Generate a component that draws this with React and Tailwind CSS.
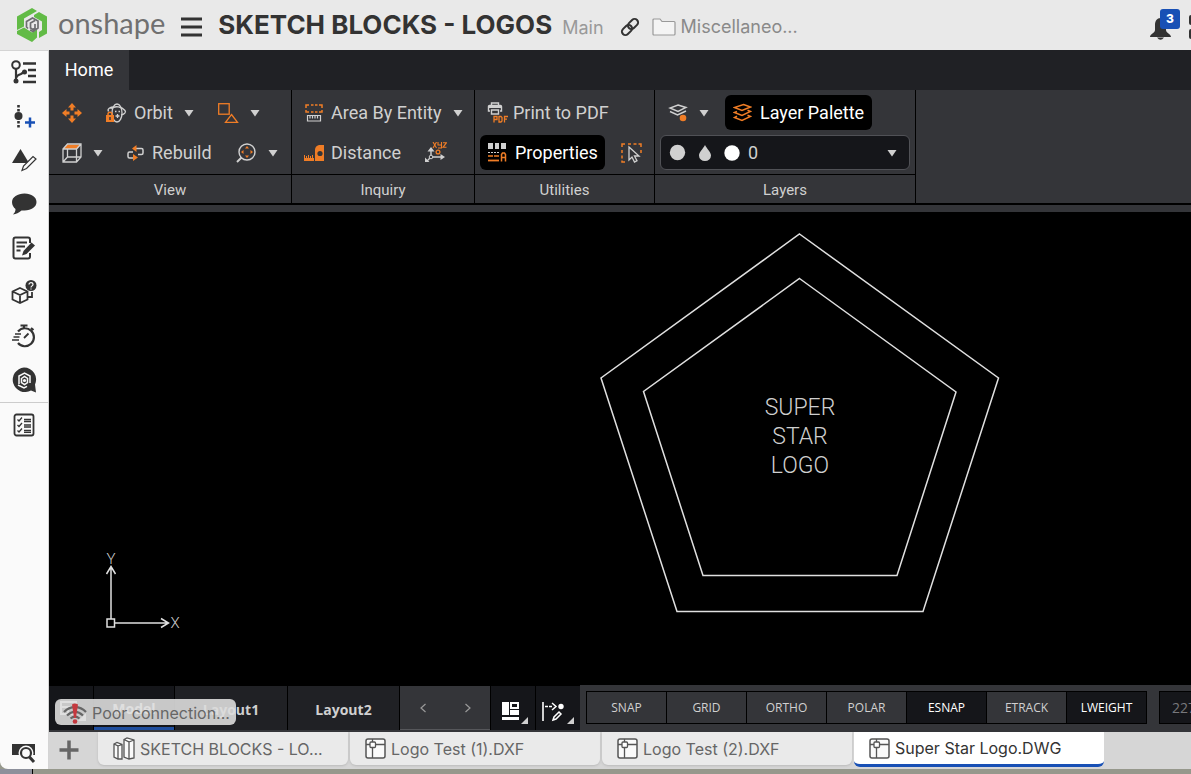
import React from 'react';

const G = '#d0d0d0';
const O = '#f07d26';
const D = '#333333';

function Svg({ w, h, children, className = '' }) {
  return (
    <svg width={w} height={h} viewBox={`0 0 ${w} ${h}`} fill="none" aria-hidden="true" className={`shrink-0 ${className}`}>
      {children}
    </svg>
  );
}

const Caret = () => (
  <Svg w={10} h={8}><path d="M.5 1h9L5 7.500z" fill={G} /></Svg>
);

const MoveIcon = () => (
  <Svg w={20} h={20}>
    <path fill={O} d="M10 0l4 4.500h-2.500V7.500h-3V4.500H6zM10 20l4-4.500h-2.500v-3h-3v3H6zM0 10l4.500-4v2.500h3v3h-3V14zM20 10l-4.500-4v2.500h-3v3h3V14z" />
  </Svg>
);
const OrbitIcon = () => (
  <Svg w={21} h={22}>
    <ellipse cx="11" cy="11" rx="5" ry="9" stroke={G} strokeWidth="1.300" />
    <path d="M5 6.500c4-3 11-2 14 2 1.500 2-1 4-4 4.500M2.500 9.500C1 7 4 5 8 5" stroke={G} strokeWidth="1.300" />
    <path d="M9 9.500h1.500M12.500 9.500H14M11.500 12v4M9.500 14h4" stroke={G} strokeWidth="1.300" />
    <path d="M2 14v-2c0-2.500 4-2.500 4 0v2" stroke={O} strokeWidth="1.500" />
    <rect x="0" y="13" width="8" height="7" fill={O} />
    <path d="M4 15v3" stroke="#343539" strokeWidth="1.500" />
  </Svg>
);
const ShapesIcon = () => (
  <Svg w={21} h={20}>
    <rect x=".7" y=".7" width="10.500" height="10.500" stroke={O} strokeWidth="1.300" />
    <path d="M13.500 11.500L19.500 19.300H7.500z" stroke={O} strokeWidth="1.300" />
  </Svg>
);
const CubeIcon = () => (
  <Svg w={20} h={20}>
    <path d="M5 1.500h14l-4 4.500H1z" fill={O} />
    <path d="M1 6l4.500-5H19v13l-4.500 5H1zM1 6h13.500L19 1M14.500 6v13M5.500 6v8.500M1 19l4.500-5H14M5.500 14H19" stroke={G} strokeWidth="1.300" />
  </Svg>
);
const RebuildIcon = () => (
  <Svg w={17} h={16}>
    <path d="M6 13H2.500Q1 13 1 11.500V8.500Q1 7 2.500 7H6M9 3.500h5.500Q16 3.500 16 5v3q0 1.500-1.500 1.500H11" stroke={G} strokeWidth="1.500" />
    <path d="M9.500 0v7L5 3.500zM6 9v7l5-3.500z" fill={O} />
  </Svg>
);
const ZoomIcon = () => (
  <Svg w={20} h={20}>
    <circle cx="11" cy="9" r="8" stroke={G} strokeWidth="1.400" />
    <path d="M5.500 14.500L1 19" stroke={G} strokeWidth="2" />
    <path d="M11 3l2 2.500H9zM11 15l2-2.500H9zM5 9l2.500-2v4zM17 9l-2.500-2v4z" fill={O} />
  </Svg>
);
const AreaIcon = () => (
  <Svg w={18} h={18}>
    <path d="M1 4V1h3M14 1h3v3M17 6v2h-3M4 8H1V6M6 1h2.500M10 1h2.500M6 8h2.500M10 8h2.500" stroke={O} strokeWidth="1.500" />
    <path d="M2.500 11.500h13v5.500h-13zM5 12v2.500M7.500 12v2.500M10 12v2.500M12.500 12v2.500" stroke={G} strokeWidth="1.200" />
  </Svg>
);
const TapeIcon = () => (
  <Svg w={20} h={16}>
    <path fill={O} d="M11 16V5q0-4 4-5h5v16zM0 13h10v3H0zM0 10h1v3H0zM2 11h1v2H2zM4 10h1v3H4zM6 11h1v2H6zM8 10h1v3H8z" />
    <circle cx="16" cy="8.500" r="2.600" fill="#343539" />
  </Svg>
);
const XyzIcon = () => (
  <Svg w={22} h={22}>
    <path d="M6 8v7M6 15h11M6 15l-4 4" stroke={G} strokeWidth="1.400" />
    <path d="M6 5l3.500 4.500h-7zM20 15l-4.500-3v6zM0 20v-4.500L4.500 20z" fill={G} />
    <circle cx="6" cy="15" r="1.800" fill="#343539" stroke={G} />
    <circle cx="13" cy="10" r="1.900" stroke={O} strokeWidth="1.300" />
    <path d="M8 0l3.500 6M11.500 0L8 6M13 0v3h3.500M16.500 0v6H13M18 .7h3.500L18 5.300h3.500" stroke={O} strokeWidth="1.100" />
  </Svg>
);
const PrintIcon = () => (
  <Svg w={22} h={21}>
    <path d="M4.500 4V1h7v3M3 9H1.500V4.500q0-1 1-1h11q1 0 1 1V9H13M4.500 8h7v4h-7z" stroke={G} strokeWidth="1.400" />
    <path d="M1.500 4h13v2h-13z" fill={G} />
    <path d="M7 20.500v-6h3v3H7M12 14.500v5.500h2l1-1v-3.500l-1-1zM17.500 20.500v-6h3.500M17.500 17.200h2.500" stroke={O} strokeWidth="1.300" />
  </Svg>
);
const PropsIcon = () => (
  <Svg w={20} h={19}>
    <path fill={G} d="M1 0h5v6H1zM8 0h4v6H8zM14 0h5v6h-5z" />
    <path d="M1 9.500h11" stroke={G} strokeWidth="1.200" strokeDasharray="2 1" />
    <path d="M1 13h11" stroke={O} strokeWidth="1.500" strokeDasharray="5 1" />
    <path d="M1 17.500h11" stroke={O} strokeWidth="1.800" />
    <path d="M14.500 18.500v-7l1-1.500h2l1 1.500v7M14.500 14.500h4" stroke={O} strokeWidth="1.500" />
  </Svg>
);
const SelectIcon = () => (
  <Svg w={21} h={20}>
    <path d="M1 4V1h3M7 1h3M12.500 1h3M17.500 1H20v3M1 7v3M1 12.500v3M1 17.500V19h3M20 7v3" stroke={O} strokeWidth="1.500" />
    <path d="M8 4v13l3-3 2.500 5 2.500-1.300L13.500 13H18z" fill="#343539" stroke={G} strokeWidth="1.300" />
  </Svg>
);
const LayerDotIcon = () => (
  <Svg w={20} h={18}>
    <path d="M10 1l8 2.500-8 4-8-3.500zM2 7.500l7.500 3.500L18 7" stroke={G} strokeWidth="1.400" />
    <circle cx="15" cy="14" r="3.300" fill={O} />
  </Svg>
);
const LayersIcon = () => (
  <Svg w={19} h={19}>
    <path d="M10.500 1.500l7 2.500-8.500 3.500L1.500 4.500zM4 8.500L1.500 9.500l7.500 3 8.500-4-3-1.300M4 13.200l-2.500 1.300 7.500 3 8.500-4-3-1.300" stroke={O} strokeWidth="1.500" />
  </Svg>
);

const rail = [
  ['Feature list', <Svg w={26} h={24} key="i">
    <circle cx="5" cy="5" r="3.800" stroke={D} strokeWidth="2" />
    <path d="M5 9v12M5 18c1-3 3-3.500 5-4l3-2" stroke={D} strokeWidth="2.200" />
    <circle cx="5" cy="21" r="2.500" fill={D} /><circle cx="13.500" cy="12" r="2.500" fill={D} />
    <path d="M12 3.500h13M17 10h8M17 16h8M12 22h13" stroke={D} strokeWidth="2.400" />
  </Svg>],
  ['Insert', <Svg w={26} h={24} key="i">
    <path d="M7.500 1v23" stroke={D} strokeWidth="2.600" strokeDasharray="2.500 1.500" />
    <circle cx="7.500" cy="12" r="4" fill={D} />
    <path d="M14 18.500h10M19 13.500v10" stroke="#1850b5" strokeWidth="2.500" />
  </Svg>],
  ['Appearance', <Svg w={26} h={24} key="i">
    <path d="M9.500 1L18 15H1z" fill={D} />
    <path d="M11 22.500l1.500-4.500 9.500-9.500 3 2.500-9.500 9.500z" fill="#fafafa" stroke={D} strokeWidth="1.200" />
  </Svg>],
  ['Comments', <Svg w={26} h={24} key="i">
    <path fill={D} d="M13.500 1.500c7 0 12 3.600 12 8.500s-5 8.500-12 8.500h-3C8 21 5 22 2 22.500c1.500-1.500 2.500-3 2.500-5.500-2-1.500-3.500-4-3.500-7 0-4.900 5.500-8.500 12.500-8.500z" />
  </Svg>],
  ['Notes', <Svg w={26} h={24} key="i">
    <path d="M19 7V3.500Q19 1.500 17 1.500H4.500q-2 0-2 2v17q0 2 2 2H17q2 0 2-2V17" stroke={D} strokeWidth="2" />
    <path d="M5.500 6.500H16M5.500 10.500H14M5.500 14.500h4" stroke={D} strokeWidth="2" />
    <path fill={D} d="M11 19.500l1.500-4.500 8-8.500 3.500 3-8.500 8.500z" />
  </Svg>],
  ['Part help', <Svg w={26} h={24} key="i">
    <path d="M9 8l7.500 3.500v8L9 23l-7.500-3.500v-8zM1.500 11.500L9 15l7.500-3.500M9 15v8M17 17h4v-5" stroke={D} strokeWidth="1.800" />
    <circle cx="20" cy="5.500" r="5.500" fill={D} />
    <path d="M18 4.500c0-2.500 4-2.500 4 0 0 1.300-2 1.500-2 3M20 8.500v1" stroke="#fafafa" strokeWidth="1.200" />
  </Svg>],
  ['Timing', <Svg w={26} h={24} key="i">
    <path d="M7 7.500A9 9 0 1 1 7 19M9.500 1.500h7M13 2v3M20 4l2.500 2" stroke={D} strokeWidth="2.200" />
    <path d="M13 14l4.500-4.500" stroke={D} strokeWidth="1.800" />
    <path d="M4 10h6M2.500 13h6M1 16h7" stroke={D} strokeWidth="1.500" />
  </Svg>],
  ['Support', <Svg w={26} h={26} key="i">
    <path fill={D} d="M13 .5a12 12 0 0 1 11 17l1 8-5-2A12.300 12.300 0 1 1 13 .5z" />
    <path d="M8 17V9l5.500-3 5.500 3v7M7 18l6 3 3-1.700M10.500 11.500l3-2 3 2v4l-3 2-3-2z" stroke="#fafafa" strokeWidth="1.500" />
    <circle cx="13.500" cy="13.500" r="1.600" fill="#fafafa" />
  </Svg>],
];

function Rail() {
  return (
    <nav className="flex w-[49px] shrink-0 flex-col rounded-bl-lg border-r border-[#d4d4d4] bg-[#fafafa] shadow-[inset_0_1px_0_#d4d4d4]">
      {rail.map(([label, icon]) => (
        <button key={label} aria-label={label} className="flex h-11 items-center justify-center">{icon}</button>
      ))}
      <button aria-label="Checklist" className="flex h-11 items-center justify-center border-t border-[#cccccc]">
        <Svg w={22} h={24}>
          <rect x="1.500" y="1.500" width="19" height="21" rx="2" stroke={D} strokeWidth="1.800" />
          <path d="M4.500 6.500L6 8l3-3.500M4.500 12L6 13.500l3-3.500M4.500 17.500L6 19l3-3.500M11 6.500h7M11 8.500h7M11 12h7M11 14h7M11 17.500h7M11 19.300h7" stroke={D} strokeWidth="1.300" />
        </Svg>
      </button>
      <button aria-label="Tab manager" className="mt-auto flex h-8 items-center justify-center">
        <Svg w={24} h={20}>
          <path fill={D} d="M0 1h23v11H0z" />
          <circle cx="14" cy="10" r="7.500" fill="#fafafa" />
          <circle cx="14" cy="10" r="5" stroke={D} strokeWidth="2.200" />
          <path d="M17.500 14l4.500 5" stroke={D} strokeWidth="3" />
        </Svg>
      </button>
    </nav>
  );
}

function Header() {
  return (
    <header className="flex h-[50px] shrink-0 items-center overflow-hidden bg-[#e9e9e9] pl-4 font-[Inter,sans-serif] whitespace-nowrap">
      <Svg w={32} h={36}>
        <path fill="#62bb46" d="M16 1l5 3-13 7.500v8L1 23V9.500zM23 5l8 4.500v17L23 31v-6l3-2v-8.500l-8-4.500v-2zM1 24l7-3.500 8 5 5-3v8L16 35 1 27z" />
        <path d="M12 21.500l-1.500-1.500v-5.500l6-3.500 5.500 3v7l-5 3.500-3-1.500M19 13.500l-4.500 2.500v5l2.500 1.500 2-1.500v-4" stroke="#6d6e70" strokeWidth="1.700" />
      </Svg>
      <span className="ml-2.5 pb-1 font-[Lato,sans-serif] text-[29px] leading-8 text-[#707070]">onshape</span>
      <button aria-label="Menu" className="ml-4 pt-1">
        <Svg w={21} h={20}><path d="M0 2h21M0 10h21M0 18h21" stroke={D} strokeWidth="3.200" /></Svg>
      </button>
      <h1 className="ml-4 text-[26px] leading-8 font-bold text-[#333333]">SKETCH BLOCKS - LOGOS</h1>
      <span className="ml-2.5 pt-1.5 text-lg text-[#999999]">Main</span>
      <button aria-label="Copy link" className="ml-4 pt-1">
        <Svg w={20} h={20}>
          <g transform="rotate(-45 10 10)" stroke={D} strokeWidth="2">
            <rect x="0" y="6.500" width="11.500" height="7" rx="3.500" /><rect x="8.500" y="6.500" width="11.500" height="7" rx="3.500" />
          </g>
        </Svg>
      </button>
      <a href="#folder" className="ml-3 flex items-center gap-[5px] pt-1 text-lg text-[#8a8a8a]">
        <Svg w={24} h={18}><path d="M1 16V2q0-1 1-1h6l2 2.500h12q1 0 1 1V16q0 1-1 1H2q-1 0-1-1z" fill="#f4f4f4" stroke="#999" strokeWidth="1.200" /></Svg>
        Miscellaneo...
      </a>
      <button aria-label="Notifications" className="relative ml-auto pt-2">
        <Svg w={22} h={24}><path fill={D} d="M10.500 1C14 1 16 4 16 8v5c0 3 5 4 5 7H0c0-3 5-4 5-7V8c0-4 2-7 5.500-7zM7 20.500h7q-3.500 4.500-7 0z" /></Svg>
        <span className="absolute top-0 left-2.5 flex size-5 items-center justify-center rounded-[3px] bg-[#1850b5] text-xs font-extrabold text-white">3</span>
      </button>
      <button aria-label="Apps" className="ml-[17px] flex flex-col gap-1 pt-1">
        <span className="h-2.5 w-0.5 rounded-l bg-[#333333]" />
        <span className="h-2.5 w-0.5 rounded-l bg-[#333333]" />
      </button>
    </header>
  );
}

function Tool({ label, icon, children, className = 'gap-2' }) {
  return (
    <button aria-label={label} className={`flex h-[35px] shrink-0 items-center ${className}`}>
      {icon}{children}
    </button>
  );
}

function Group({ title, width, children }) {
  return (
    <section className={`flex shrink-0 flex-col border-r border-black ${width}`}>
      <div className="flex flex-col gap-[5px] pt-[5px] pb-1">{children}</div>
      <h2 className="flex h-[29px] items-center justify-center border-t border-black pt-[3px] text-[15px]">{title}</h2>
    </section>
  );
}

function Ribbon() {
  return (
    <div className="shrink-0 bg-[#343539] font-[Roboto,sans-serif] text-lg whitespace-nowrap text-[#d0d0d0]">
      <div className="flex h-10 bg-[#202125]">
        <button className="w-20 bg-[#343539] text-white">Home</button>
      </div>
      <div className="flex overflow-hidden border-b-2 border-black">
        <Group title="View" width="w-[243px]">
          <div className="flex items-center pl-[13px]">
            <Tool label="Pan" icon={<MoveIcon />} />
            <Tool icon={<OrbitIcon />} className="ml-6 gap-[7px]">Orbit</Tool>
            <Tool label="Orbit options" icon={<Caret />} className="ml-[11px]" />
            <Tool label="Visual style" icon={<ShapesIcon />} className="ml-6" />
            <Tool label="Visual style options" icon={<Caret />} className="ml-[11px]" />
          </div>
          <div className="flex items-center pl-[13px]">
            <Tool label="View cube" icon={<CubeIcon />} />
            <Tool label="View options" icon={<Caret />} className="ml-[11px]" />
            <Tool icon={<RebuildIcon />} className="ml-6 gap-2">Rebuild</Tool>
            <Tool label="Zoom" icon={<ZoomIcon />} className="ml-6" />
            <Tool label="Zoom options" icon={<Caret />} className="ml-3" />
          </div>
        </Group>
        <Group title="Inquiry" width="w-[183px]">
          <div className="flex items-center pl-[13px]">
            <Tool icon={<AreaIcon />}>Area By Entity</Tool>
            <Tool label="Area options" icon={<Caret />} className="ml-[11px]" />
          </div>
          <div className="flex items-center pl-3">
            <Tool icon={<TapeIcon />} className="gap-[7px]">Distance</Tool>
            <Tool label="Coordinates" icon={<XyzIcon />} className="ml-6" />
          </div>
        </Group>
        <Group title="Utilities" width="w-[180px]">
          <div className="flex items-center pl-3">
            <Tool icon={<PrintIcon />} className="gap-1">Print to PDF</Tool>
          </div>
          <div className="flex items-center pl-[5px]">
            <Tool icon={<PropsIcon />} className="gap-2 rounded-md bg-black px-[7px] text-white">Properties</Tool>
            <Tool label="Quick select" icon={<SelectIcon />} className="ml-4" />
          </div>
        </Group>
        <Group title="Layers" width="w-[261px]">
          <div className="flex items-center pl-[13px]">
            <Tool label="Layer state" icon={<LayerDotIcon />} />
            <Tool label="Layer state options" icon={<Caret />} className="ml-[11px]" />
            <Tool icon={<LayersIcon />} className="ml-4 gap-2 rounded-md bg-black px-2 text-white">Layer Palette</Tool>
          </div>
          <button aria-label="Current layer" className="mx-[5px] flex h-[35px] items-center gap-3 rounded-md border border-[#505156] bg-[#15161a] px-2">
            <Svg w={17} h={17}><circle cx="8.500" cy="8.500" r="7.700" fill={G} /></Svg>
            <Svg w={14} h={17}><path d="M7 1c2 4 6 7 6 10.500a6 5.500 0 0 1-12 0C1 8 5 5 7 1z" fill={G} /></Svg>
            <Svg w={16} h={16}><circle cx="8" cy="8" r="7.700" fill="#fff" /></Svg>
            <span className="-ml-1">0</span>
            <span className="mr-1 ml-auto"><Caret /></span>
          </button>
        </Group>
      </div>
      <div className="h-[7px]" />
    </div>
  );
}

function Drawing() {
  return (
    <main className="min-h-0 flex-1 bg-black">
      <svg viewBox="0 0 1142 473" fill="none" className="size-full" role="img" aria-label="Drawing canvas">
        <g stroke="#e0e0e0" strokeWidth="1.500">
          <path d="M750.500 22L949.500 166 874 399.500H628L552 166zM750.500 66.500L907 180 848 363.500H654L594.500 179.500z" />
          <path d="M62 407v-52M66 411h52M57.500 362l4.500-7.500 4.500 7.500M112 406.500l7.500 4.500-7.500 4.500" />
          <rect x="58" y="407" width="7.500" height="8" />
        </g>
        <g fill="#cfcfcf" textAnchor="middle" fontFamily="Roboto, sans-serif" fontSize="23" fontWeight="300">
          <text x="751" y="203">SUPER</text>
          <text x="751" y="232">STAR</text>
          <text x="751" y="261">LOGO</text>
        </g>
        <g fill="#cfcfcf" textAnchor="middle" fontFamily="Roboto, sans-serif" fontSize="15" fontWeight="300">
          <text x="62" y="352">Y</text>
          <text x="126" y="416">X</text>
        </g>
      </svg>
    </main>
  );
}

const modes = [['SNAP'], ['GRID'], ['ORTHO'], ['POLAR'], ['ESNAP', true], ['ETRACK'], ['LWEIGHT', true]];

function StatusBar() {
  return (
    <div className="relative flex h-[47px] shrink-0 border-b-2 border-[#343539] bg-[#343539] font-['Open_Sans',sans-serif] whitespace-nowrap text-[#d0d0d0]">
      <div className="flex shrink-0 gap-px bg-black pt-px text-sm font-bold">
        <button aria-label="Layout list" className="flex w-11 items-center justify-center bg-[#15161a] pt-1">
          <Svg w={30} h={22}><path d="M5 3h15v12H5zM5 8h15M12 8v7" stroke="#fff" strokeWidth="2" /><path d="M30 14v8h-8z" fill="#fff" /></Svg>
        </button>
        <button className="w-20 border-b-[3px] border-[#1f4e9e] bg-[#15161a] pt-1 text-white">Model</button>
        <button className="w-28 bg-[#202125] pt-1">Layout1</button>
        <button className="w-[111px] bg-[#202125] pt-1">Layout2</button>
        <div className="flex w-[90px] items-center justify-around border-b border-[#56575b] bg-[#343539]">
          <button aria-label="Previous layout"><Svg w={8} h={10}><path d="M6.500 1L2 5l4.500 4" stroke="#999" strokeWidth="1.200" /></Svg></button>
          <button aria-label="Next layout"><Svg w={8} h={10}><path d="M1.500 1L6 5 1.500 9" stroke="#999" strokeWidth="1.200" /></Svg></button>
        </div>
        <button aria-label="Workspace" className="flex w-11 items-center justify-center bg-[#15161a] pt-2 pl-1">
          <Svg w={28} h={24}>
            <path fill="#fff" d="M1 2h7v13H1zM9 2h9v7H9zM9 10h9v5H9zM1 17h17v3H1z" /><path fill="#15161a" d="M11 4h5v3h-5z" /><path fill={G} d="M27 17v7h-7z" />
          </Svg>
        </button>
        <button aria-label="Snap settings" className="flex w-11 items-center justify-center bg-[#15161a] pt-2">
          <Svg w={34} h={24}>
            <path d="M2 2v19" stroke="#fff" strokeWidth="1.600" /><path d="M4 6.500h8" stroke="#fff" strokeWidth="1.600" strokeDasharray="3 1" />
            <path d="M11 3l4 3.500-4 3.500M12 20l1-3 5-5 2 2-5 5z" stroke="#fff" strokeWidth="1.500" />
            <circle cx="20" cy="6.500" r="2.700" fill="#fff" /><path fill={G} d="M33 17v7h-7z" />
          </Svg>
        </button>
      </div>
      <div className="flex min-w-0 flex-1 gap-3 overflow-hidden py-1.5 pl-1.5 text-xs">
        <div className="flex h-[33px] shrink-0 border-l border-black">
          {modes.map(([m, on]) => (
            <button key={m} className={`w-20 border-y border-r border-black ${on ? 'bg-[#15161a] text-white' : ''}`}>{m}</button>
          ))}
        </div>
        <div className="flex h-[33px] w-40 shrink-0 items-center border border-black bg-[#15161a] pl-3 text-sm text-[#77787c]">2271</div>
      </div>
      <div role="status" className="absolute top-3.5 left-1.5 flex h-[26px] w-[181px] items-center gap-[5px] rounded-md bg-[#dcdcdc]/90 pt-0.5 pl-2 font-[Inter,sans-serif] text-base text-[#666666]">
        <Svg w={24} h={21}>
          <path d="M1 9C7 2.500 17 2.500 23 9M4 12.500c5-5 11-5 16 0M7.500 15.500c3-2.500 6-2.500 9 0" stroke="#666" strokeWidth="2.200" />
          <path d="M9 1.500Q12-.5 15 1.500L13 15h-2z" fill="#c5393f" /><circle cx="12" cy="18.500" r="2.300" fill="#c5393f" />
        </Svg>
        Poor connection...
      </div>
    </div>
  );
}

const DwgIcon = () => (
  <Svg w={21} h={21}>
    <rect x="1" y="1" width="19" height="19" rx="2" fill="#fafafa" stroke="#555" strokeWidth="1.500" />
    <path d="M7.500 1v19M1 6.500h19" stroke="#555" strokeWidth="1.300" />
    <rect x="5" y="4" width="5.500" height="5.500" rx="1" fill="#fff" stroke="#555" strokeWidth="1.300" />
  </Svg>
);
const PartIcon = () => (
  <Svg w={22} h={23}>
    <path d="M1 7l3-1.500L9 7.500V22H5L1 20zM1 7l4 2v13M5 9l4-1.500M11 2.500L14 1l7 2v18l-5 1-5-2zM11 2.500l5 2.500v17M16 5l5-2" fill="#fafafa" stroke="#555" strokeWidth="1.300" />
  </Svg>
);
const docs = ['SKETCH BLOCKS - LO...', 'Logo Test (1).DXF', 'Logo Test (2).DXF', 'Super Star Logo.DWG'];

function DocTabs() {
  return (
    <div className="flex h-[37px] shrink-0 items-start overflow-hidden bg-[#d6d6d6] font-[Inter,sans-serif] text-base whitespace-nowrap text-[#666666]">
      <button aria-label="Add tab" className="flex h-9 w-10 shrink-0 items-center justify-center">
        <Svg w={20} h={20}><path d="M10 .5v19M.5 10h19" stroke="#666" strokeWidth="3.500" /></Svg>
      </button>
      <div className="flex gap-0.5 pl-[9px]">
        {docs.map((d, i) => (
          <button
            key={d}
            className={`flex w-[250px] shrink-0 items-center gap-[5px] rounded-b-md pl-[15px] ${i === 3 ? 'h-[35px] border-b-[3px] border-[#1850b5] bg-white text-[#333333]' : 'h-[33px] bg-[#eaeaea] shadow-sm'}`}
          >
            {i === 0 ? <PartIcon /> : <DwgIcon />}
            {d}
          </button>
        ))}
      </div>
    </div>
  );
}

export default function App() {
  return (
    <div className="flex h-screen flex-col overflow-hidden bg-[#96988c]">
      <Header />
      <div className="flex min-h-0 flex-1">
        <Rail />
        <div className="flex min-w-0 flex-1 flex-col">
          <Ribbon />
          <Drawing />
          <StatusBar />
          <DocTabs />
        </div>
      </div>
      <div className="h-[5px] shrink-0">
        <div className="h-full w-[33px] border-r border-black bg-[#8d909b]" />
      </div>
    </div>
  );
}
